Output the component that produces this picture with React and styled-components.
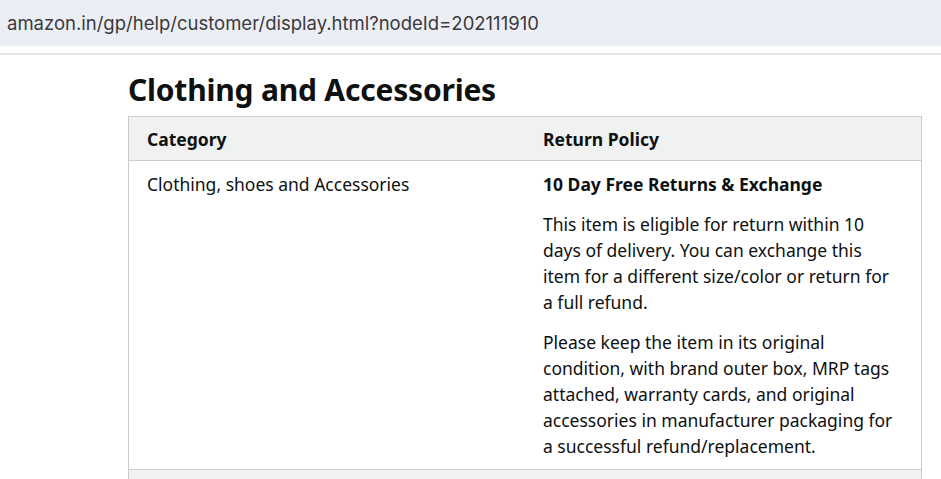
import React from "react";
import styled, { createGlobalStyle } from "styled-components";

const GlobalStyle = createGlobalStyle`
  html, body {
    margin: 0;
    padding: 0;
    background: #ffffff;
  }
  body {
    font-family: "Noto Sans", "Open Sans", sans-serif;
    color: #0f1111;
  }
`;

const AddressBar = styled.div`
  height: 46px;
  background: #eceef6;
  display: flex;
  align-items: center;
  padding-left: 7px;
  font-family: "Inter", "Liberation Sans", sans-serif;
  font-size: 18.5px;
  color: #3a3a3c;
  margin-bottom: 7px;
`;

const Divider = styled.div`
  height: 2px;
  background: #e6e6e6;
`;

const Content = styled.main`
  padding: 16px 20px 0 128px;
`;

const Title = styled.h2`
  margin: 0 0 7px;
  font-size: 30px;
  line-height: 38px;
  font-weight: 700;
  color: #0f1111;
  letter-spacing: -0.2px;
`;

const Table = styled.table`
  width: 794px;
  border-collapse: collapse;
  table-layout: fixed;
  font-size: 17.5px;
  line-height: 26px;
  border-left: 1px solid #cdcdcd;
  border-right: 1px solid #cdcdcd;
  border-top: 1px solid #cdcdcd;
`;

const Row = styled.tr`
  background: ${(p) => (p.$shaded ? "#f0f2f2" : "#ffffff")};
  border-bottom: ${(p) => (p.$last ? "0" : "1px solid #cdcdcd")};
`;

const HeadCell = styled.th`
  text-align: left;
  font-weight: 700;
  padding: 9px 18px 8px;
  width: 50%;
`;

const Cell = styled.td`
  vertical-align: top;
  padding: ${(p) => (p.$empty ? "0" : "10px 18px 10px")};
  height: ${(p) => (p.$empty ? "10px" : "auto")};
`;

const Para = styled.p`
  margin: 0 0 14px;
  font-weight: ${(p) => (p.$bold ? 700 : 400)};
  &:last-child {
    margin-bottom: 0;
  }
`;

export default function App() {
  return (
    <>
      <GlobalStyle />
      <AddressBar>amazon.in/gp/help/customer/display.html?nodeId=202111910</AddressBar>
      <Divider />
      <Content>
        <Title>Clothing and Accessories</Title>
        <Table>
          <thead>
            <Row $shaded>
              <HeadCell>Category</HeadCell>
              <HeadCell>Return Policy</HeadCell>
            </Row>
          </thead>
          <tbody>
            <Row>
              <Cell>Clothing, shoes and Accessories</Cell>
              <Cell>
                <Para $bold>10 Day Free Returns &amp; Exchange</Para>
                <Para>
                  This item is eligible for return within 10 days of delivery. You can
                  exchange this item for a different size/color or return for a full
                  refund.
                </Para>
                <Para>
                  Please keep the item in its original condition, with brand outer box,
                  MRP tags attached, warranty cards, and original accessories in
                  manufacturer packaging for a successful refund/replacement.
                </Para>
              </Cell>
            </Row>
            <Row $shaded $last>
              <Cell $empty />
              <Cell $empty />
            </Row>
          </tbody>
        </Table>
      </Content>
    </>
  );
}
